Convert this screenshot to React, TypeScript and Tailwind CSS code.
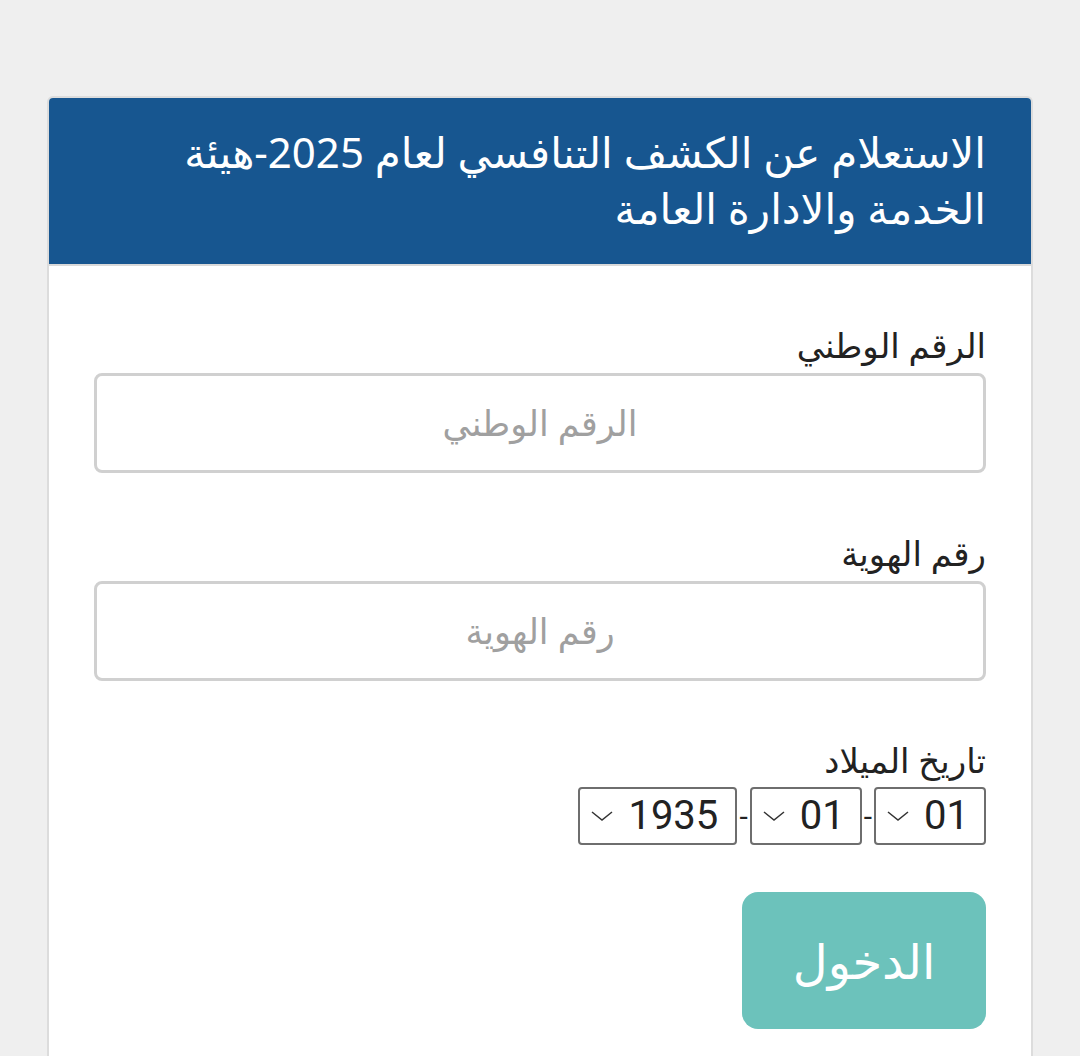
import React from "react";

const Chevron = () => (
  <svg width="24" height="14" viewBox="0 0 24 14" fill="none" stroke="#333" strokeWidth="1.5">
    <path d="M2 3 L12 11 L22 3" />
  </svg>
);

function Select({ value, width }: { value: string; width: string }) {
  return (
    <div
      dir="ltr"
      className={`flex items-center h-[58px] ${width} border-2 border-[#6e6e6e] rounded-[4px] bg-white pl-[10px] pr-[12px] gap-[14px]`}
    >
      <Chevron />
      <span className="text-[40px] text-[#222] leading-none" style={{ fontFamily: "Roboto, sans-serif" }}>
        {value}
      </span>
    </div>
  );
}

export default function App() {
  return (
    <div
      dir="rtl"
      className="min-h-[1056px] bg-[#efefef] pt-[96px] pl-[47px] pr-[47px]"
      style={{ fontFamily: '"Noto Sans", "DejaVu Sans", Roboto, sans-serif' }}
    >
      <div className="bg-white border-2 border-[#dcdcdc] border-b-0 rounded-t-[6px] overflow-hidden h-[962px]">
        <div className="bg-[#175690] text-white text-[42px] leading-[56px] px-[45px] pt-[26px] pb-[28px] border-b-2 border-[#d9d9d9]">
          الاستعلام عن الكشف التنافسي لعام 2025-هيئة الخدمة والادارة العامة
        </div>
        <div className="px-[45px] pt-[59px]">
          <label className="block text-[34px] text-[#222] leading-[40px] mb-[8px]">الرقم الوطني</label>
          <div className="h-[100px] border-[3px] border-[#d0d0d0] rounded-[8px] flex items-center justify-center text-[35px] text-[#a0a0a0]">
            الرقم الوطني
          </div>
          <label className="block text-[34px] text-[#222] leading-[40px] mt-[60px] mb-[8px]">رقم الهوية</label>
          <div className="h-[100px] border-[3px] border-[#d0d0d0] rounded-[8px] flex items-center justify-center text-[35px] text-[#a0a0a0]">
            رقم الهوية
          </div>
          <label className="block text-[34px] text-[#222] leading-[40px] mt-[59px]">تاريخ الميلاد</label>
          <div className="flex items-center mt-[7px]">
            <Select value="01" width="w-[112px]" />
            <span className="text-[30px] text-[#222] px-[2px]" style={{ fontFamily: "Roboto, sans-serif" }}>-</span>
            <Select value="01" width="w-[112px]" />
            <span className="text-[30px] text-[#222] px-[2px]" style={{ fontFamily: "Roboto, sans-serif" }}>-</span>
            <Select value="1935" width="w-[159px]" />
          </div>
          <button className="mt-[47px] w-[244px] h-[137px] bg-[#6cc2bb] rounded-[16px] text-white text-[48px]">
            الدخول
          </button>
        </div>
      </div>
    </div>
  );
}
